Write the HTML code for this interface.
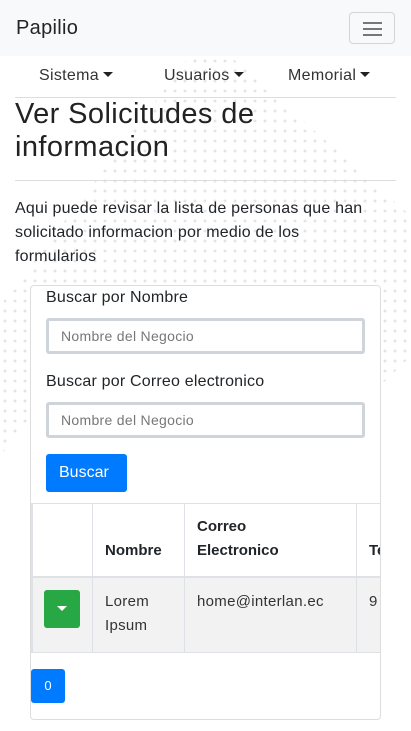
<!DOCTYPE html>
<html><head><meta charset="utf-8"><style>
*{box-sizing:border-box;margin:0;padding:0}
body{width:411px;height:731px;overflow:hidden;background:#fff;font-family:"Liberation Sans",sans-serif;color:#212529;position:relative}
.dots{position:absolute;left:0;top:56px;width:411px;height:500px;background-image:radial-gradient(circle,#e4e4e4 1.3px,transparent 1.6px);background-size:10px 10px;clip-path:polygon(190px 0,230px 0,411px 160px,411px 300px,380px 330px,60px 330px,0 400px,0 250px);}
.nav{position:absolute;left:0;top:0;width:411px;height:56px;background:#f8f9fa}
.brand{position:absolute;left:16px;top:17px;font-size:20px;color:#212529;letter-spacing:0.3px}
.tog{position:absolute;left:349px;top:12px;width:46px;height:32px;border:1px solid #d5d5d5;border-radius:4px}
.tog i{position:absolute;left:13px;width:19px;height:2px;background:#777}
.menu{position:absolute;top:67px;font-size:16px;color:#333;letter-spacing:0.3px}
.car{display:inline-block;width:0;height:0;border-left:5px solid transparent;border-right:5px solid transparent;border-top:5px solid #222;vertical-align:3px;margin-left:4px}
.hr{position:absolute;left:15px;width:381px;height:1px;background:#ddd}
h1{position:absolute;left:15px;top:98px;font-size:29px;font-weight:normal;line-height:33px;color:#222;letter-spacing:0.4px}
.p{position:absolute;left:15px;top:197px;font-size:16px;line-height:24px;width:390px;letter-spacing:0.2px}
.card{position:absolute;left:30px;top:285px;width:351px;height:435px;border:1px solid #ddd;border-radius:4px;background:#fff;overflow:hidden}
.lab{position:absolute;left:15px;font-size:16px;letter-spacing:0.2px}
.inp{position:absolute;left:15px;width:319px;height:36px;border:3px solid #ced4da;border-radius:3px;font-size:14px;color:#777;padding:7px 12px;letter-spacing:0.3px}
.btn{position:absolute;background:#007bff;color:#fff;border-radius:3px}
.tl{position:absolute;background:#dee2e6}
.th{position:absolute;font-weight:bold;font-size:15px;line-height:24px}
.td{position:absolute;font-size:15px;line-height:24px;color:#333;letter-spacing:0.3px}
</style></head><body>
<div class="dots"></div>
<div class="nav"><div class="brand">Papilio</div><div class="tog"><i style="top:9px"></i><i style="top:15px"></i><i style="top:21px"></i></div></div>
<div class="menu" style="left:39px">Sistema<span class="car"></span></div>
<div class="menu" style="left:164px">Usuarios<span class="car"></span></div>
<div class="menu" style="left:288px">Memorial<span class="car"></span></div>
<div class="hr" style="top:97px"></div>
<h1>Ver Solicitudes de<br>informacion</h1>
<div class="hr" style="top:180px"></div>
<div class="p">Aqui puede revisar la lista de personas que han<br>solicitado informacion por medio de los<br>formularios</div>
<div class="card">
<div class="lab" style="top:3px">Buscar por Nombre</div>
<div class="inp" style="top:32px">Nombre del Negocio</div>
<div class="lab" style="top:87px">Buscar por Correo electronico</div>
<div class="inp" style="top:116px">Nombre del Negocio</div>
<div class="btn" style="left:15px;top:168px;width:81px;height:38px;font-size:16px;padding:10px 13px">Buscar</div>
<div class="tl" style="left:0;top:217px;width:351px;height:1px"></div>
<div class="tl" style="left:0;top:290px;width:351px;height:2px"></div>
<div class="tl" style="left:0;top:366px;width:351px;height:1px"></div>
<div style="position:absolute;left:0;top:292px;width:351px;height:74px;background:#f2f2f2"></div>
<div class="tl" style="left:0;top:217px;width:2px;height:150px"></div>
<div class="tl" style="left:61px;top:217px;width:1px;height:150px"></div>
<div class="tl" style="left:153px;top:217px;width:1px;height:150px"></div>
<div class="tl" style="left:325px;top:217px;width:1px;height:150px"></div>
<div class="th" style="left:74px;top:253px">Nombre</div>
<div class="th" style="left:166px;top:229px">Correo<br>Electronico</div>
<div class="th" style="left:338px;top:253px">Te</div>
<div style="position:absolute;left:13px;top:304px;width:36px;height:38px;background:#28a745;border-radius:3px"><span class="car" style="border-top-color:#fff;position:absolute;left:13px;top:16px;margin:0"></span></div>
<div class="td" style="left:74px;top:304px">Lorem<br>Ipsum</div>
<div class="td" style="left:166px;top:304px">home@interlan.ec</div>
<div class="td" style="left:338px;top:304px">9</div>
<div class="btn" style="left:0;top:383px;width:34px;height:34px;font-size:13px;text-align:center;line-height:34px">0</div>
</div>
</body></html>
